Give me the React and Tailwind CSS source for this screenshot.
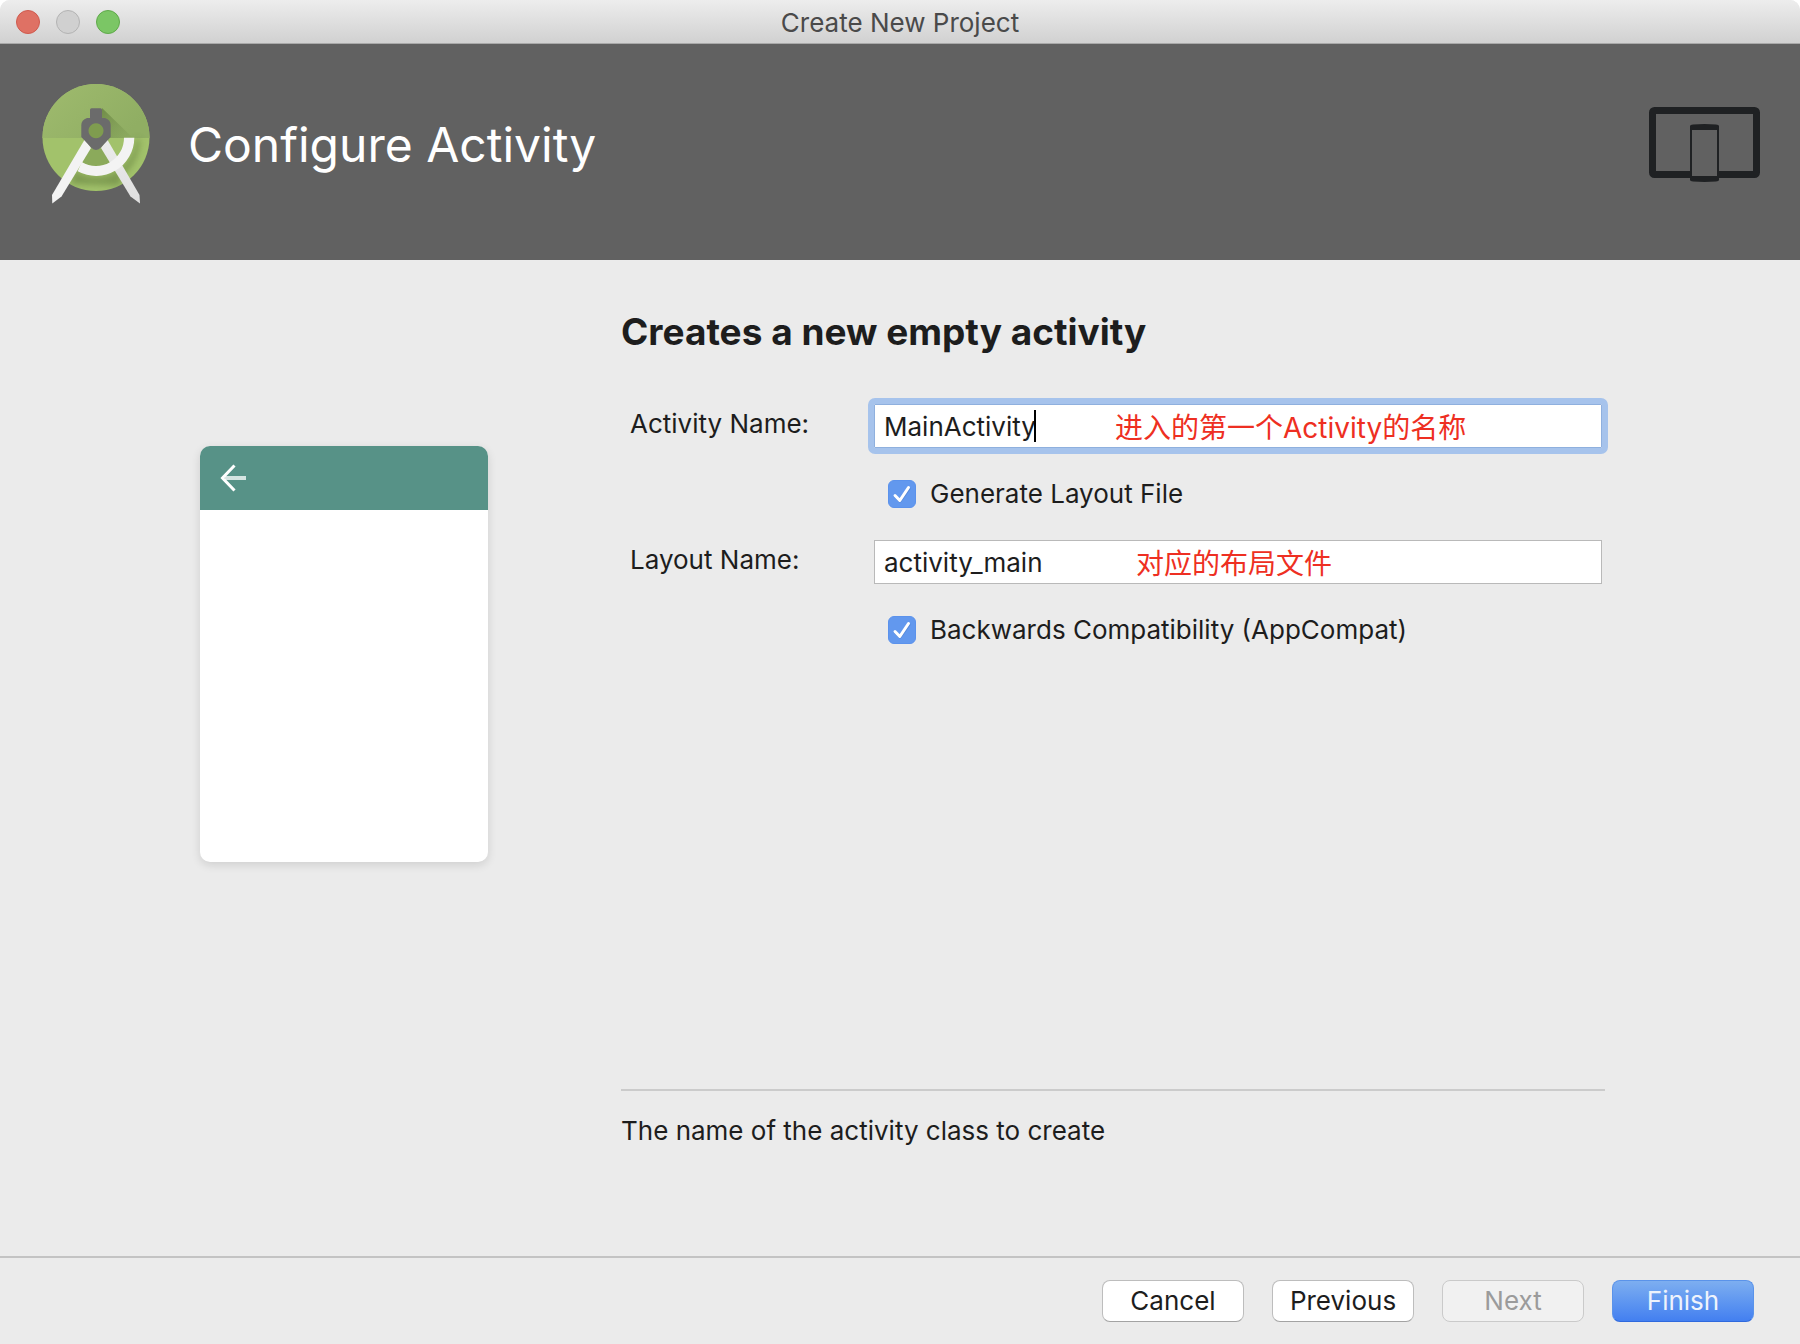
import React, { useState } from "react";

const BUTTON_BASE = "h-[42px] w-[142px] rounded-lg border text-[26px] leading-8";

function AndroidStudioLogo() {
  return (
    <svg viewBox="0 0 108 120" className="h-[120px] w-[108px] shrink-0" aria-hidden="true">
      <defs>
        <linearGradient id="topHalf" x1="0" y1="0" x2="1" y2="0.5">
          <stop offset="0" stopColor="#9fbb6e" />
          <stop offset="1" stopColor="#90ae63" />
        </linearGradient>
        <linearGradient id="headShadow" x1="0" y1="0" x2="1" y2="1">
          <stop offset="0" stopColor="#5f7a3a" stopOpacity="0.7" />
          <stop offset="1" stopColor="#7f9d55" stopOpacity="0.2" />
        </linearGradient>
        <linearGradient id="rightLeg" x1="0" y1="0" x2="0" y2="1">
          <stop offset="0" stopColor="#ececec" />
          <stop offset="1" stopColor="#dedede" />
        </linearGradient>
        <filter id="soft" x="-20%" y="-20%" width="140%" height="140%">
          <feGaussianBlur stdDeviation="3" />
        </filter>
        <clipPath id="disc">
          <circle cx="54" cy="53.5" r="53.5" />
        </clipPath>
      </defs>
      <circle cx="54" cy="53.5" r="53.5" fill="#a2c26b" />
      <g clipPath="url(#disc)">
        <rect width="108" height="54" fill="url(#topHalf)" />
        <path d="M60 24 L91 54 L66 54 L60 40 Z" fill="url(#headShadow)" />
        {/* soft shadow under the arc and between the legs */}
        <path
          d="M32 86 A40 40 0 0 0 94 54 L98 56 A46 46 0 0 1 80 92 L78 102 L60 101 L28 100 Z"
          fill="#66823f"
          opacity="0.6"
          filter="url(#soft)"
        />
        <path d="M48 64 L54 66 L60 64 L69 80 A30 30 0 0 1 40 78 Z" fill="#7c9a50" opacity="0.6" />
      </g>
      <path d="M65 55 L59 64 L88.5 112.5 L98 119.5 L97.5 111 Z" fill="url(#rightLeg)" />
      <path
        d="M82 53.7 L92.3 53.7 A38.3 38.3 0 0 1 35.7 87.3 L39.7 78 A28 28 0 0 0 82 53.7 Z"
        fill="#f3f3f3"
      />
      <path d="M43 55 L49 64 L19.5 112.5 L10.3 119.5 L10 111 Z" fill="#f3f3f3" />
      <circle cx="54" cy="46.7" r="9" fill="#7f9c4f" />
      <path
        fillRule="evenodd"
        fill="#6b6b6b"
        d="M49.5 24.3 H58.5 Q60 24.3 60 25.8 V34 H63 Q68.7 36 68.7 41 V53 L58.5 64 Q54 68 49.5 64 L39.3 53 V41 Q39.3 36 45 34 H48 V25.8 Q48 24.3 49.5 24.3 Z M54 39.2 a7.5 7.5 0 1 0 0.01 0 Z"
      />
    </svg>
  );
}

function DevicesIcon() {
  return (
    <svg viewBox="0 0 111 75" className="h-[75px] w-[111px] shrink-0" aria-hidden="true">
      <rect x="3.5" y="3.5" width="104" height="64" rx="2" fill="none" stroke="#1f2123" strokeWidth="7" />
      <path d="M41 19 Q41 17.6 44 17.4 Q55.5 16.4 67 17.4 Q70 17.6 70 19 V73 Q70 74.3 67 74.5 Q55.5 75.4 44 74.5 Q41 74.3 41 73 Z" fill="#1f2123" />
      <rect x="43" y="23" width="25" height="46" fill="#616161" />
    </svg>
  );
}

function ActivityPreview() {
  return (
    <div className="h-[416px] w-[288px] overflow-hidden rounded-[10px] bg-white shadow-[0_3px_10px_rgba(0,0,0,0.12)]">
      <div className="flex h-16 items-center bg-[#579287] pl-5">
        <svg viewBox="0 0 26 28" className="h-7 w-[26px]" fill="none" aria-hidden="true">
          <path d="M5 14 H26" stroke="#d5e4e1" strokeWidth="4" />
          <path d="M14.5 1.5 L2.5 14 L14.5 26.5" stroke="#ffffff" strokeWidth="3" />
        </svg>
      </div>
    </div>
  );
}

function TextField({ id, label, value, onChange, focused, children }) {
  return (
    <>
      <label htmlFor={id} className="pb-1 pl-[9px] text-[26px] leading-8">
        {label}
      </label>
      <div className="relative">
        <input
          id={id}
          type="text"
          value={value}
          onChange={(e) => onChange(e.target.value)}
          className={
            focused
              ? "block h-11 w-full rounded-[1px] border border-[#8fb0de] bg-white px-[9px] text-[26px] outline-6 outline-[#a6c3ec]"
              : "block h-11 w-full border border-[#b9b9b9] bg-white px-[9px] text-[26px] outline-none"
          }
        />
        {children}
      </div>
    </>
  );
}

function CheckField({ id, label, checked, onChange }) {
  return (
    <div className="col-start-2 flex items-center gap-[14px] pl-[14px]">
      <span className="grid size-7 shrink-0">
        <input
          id={id}
          type="checkbox"
          checked={checked}
          onChange={(e) => onChange(e.target.checked)}
          className="col-start-1 row-start-1 size-7 appearance-none rounded-md border border-[#bcbcbc] bg-white checked:border-[#5b92ec] checked:bg-[#6298ee]"
        />
        {checked && (
          <svg viewBox="0 0 28 28" className="pointer-events-none col-start-1 row-start-1 size-7" fill="none" aria-hidden="true">
            <path d="M7 16 L12 21 L21 8.5" stroke="#4678c4" strokeOpacity="0.5" strokeWidth="3" strokeLinecap="round" strokeLinejoin="round" />
            <path d="M7 15.5 L11.8 20.5 L20.5 7.5" stroke="#ffffff" strokeWidth="3" strokeLinecap="round" strokeLinejoin="round" />
          </svg>
        )}
      </span>
      <label htmlFor={id} className="text-[26px] leading-7">
        {label}
      </label>
    </div>
  );
}

export default function App() {
  const [activityName, setActivityName] = useState("MainActivity");
  const [layoutName, setLayoutName] = useState("activity_main");
  const [generateLayout, setGenerateLayout] = useState(true);
  const [appCompat, setAppCompat] = useState(true);

  return (
    <div className="flex min-h-screen flex-col overflow-hidden rounded-t-[10px] bg-[#ebebeb] font-['Inter','Noto_Sans_CJK_SC',sans-serif] text-[#1d1d1d]">
      {/* Title bar */}
      <div className="grid h-11 grid-cols-[1fr_auto_1fr] items-center border-b border-[#a9a9a9] bg-linear-to-b from-[#ededed] to-[#d1d1d1] px-4">
        <div className="flex gap-4">
          <button aria-label="Close" className="size-6 rounded-full border border-[#cf5a4e] bg-[#df7164]" />
          <button aria-label="Minimize" className="size-6 rounded-full border border-[#b3b3b3] bg-[#d0d0d0]" />
          <button aria-label="Zoom" className="size-6 rounded-full border border-[#5fa94a] bg-[#7bc665]" />
        </div>
        <div className="pt-0.5 text-[26px] leading-8 text-[#4a4a4a]">Create New Project</div>
      </div>

      {/* Wizard header */}
      <header className="flex h-[216px] items-start bg-[#616161] pt-10 pr-10 pl-[42px]">
        <AndroidStudioLogo />
        <h1 className="ml-[38px] flex-1 pt-[29px] text-[48px] leading-[64px] text-white">Configure Activity</h1>
        <div className="pt-[23px]">
          <DevicesIcon />
        </div>
      </header>

      <main className="flex flex-1">
        <div className="w-[621px] shrink-0 pt-[186px] pl-[200px]">
          <ActivityPreview />
        </div>

        <div className="flex flex-1 flex-col pt-[47px] pr-[195px] pb-[109px]">
          <h2 className="text-[37px] leading-[49px] font-bold">Creates a new empty activity</h2>

          <form className="mt-12 mr-[3px] grid grid-cols-[253px_1fr] items-center gap-y-8">
            <TextField id="activity-name" label="Activity Name:" value={activityName} onChange={setActivityName} focused>
              <span className="absolute top-1.5 left-[160px] h-8 w-0.5 bg-black" />
              <span className="pointer-events-none absolute top-2 left-[241px] text-[28px] leading-8 text-[#ee2f22]">
                进入的第一个Activity的名称
              </span>
            </TextField>
            <CheckField id="generate-layout" label="Generate Layout File" checked={generateLayout} onChange={setGenerateLayout} />
            <TextField id="layout-name" label="Layout Name:" value={layoutName} onChange={setLayoutName}>
              <span className="pointer-events-none absolute top-2 left-[262px] text-[28px] leading-8 text-[#ee2f22]">
                对应的布局文件
              </span>
            </TextField>
            <CheckField id="app-compat" label="Backwards Compatibility (AppCompat)" checked={appCompat} onChange={setAppCompat} />
          </form>

          <p className="mt-auto border-t-2 border-[#cbcbcb] pt-6 text-[26px] leading-8">
            The name of the activity class to create
          </p>
        </div>
      </main>

      {/* Wizard buttons */}
      <footer className="flex h-[88px] justify-end gap-7 border-t-2 border-[#c3c3c3] pt-[22px] pr-[46px]">
        <button className={`${BUTTON_BASE} border-[#bdbdbd] border-b-[#a3a3a3] bg-white`}>Cancel</button>
        <button className={`${BUTTON_BASE} border-[#bdbdbd] border-b-[#a3a3a3] bg-white`}>Previous</button>
        <button disabled className={`${BUTTON_BASE} border-[#cacaca] bg-[#f1f1f1] text-[#9b9b9b]`}>
          Next
        </button>
        <button className={`${BUTTON_BASE} border-[#5a93ea] border-b-[#2f69dd] bg-linear-to-b from-[#7daef0] to-[#437ff0] text-[#eef3fc]`}>
          Finish
        </button>
      </footer>
    </div>
  );
}
